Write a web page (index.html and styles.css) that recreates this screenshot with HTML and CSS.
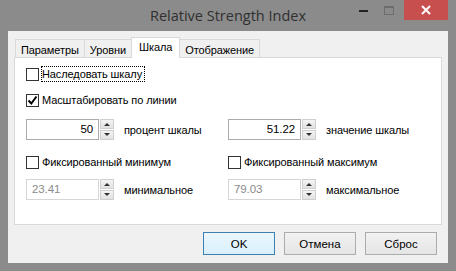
FILE: index.html
```html
<!DOCTYPE html>
<html lang="ru">
<head>
    <meta charset="UTF-8">
    <title>Relative Strength Index</title>
    <link rel="stylesheet" href="styles.css">
</head>
<body>
    <div class="window">
        <div class="titlebar">
            <div class="title">Relative Strength Index</div>
            <div class="controls">
                <span class="ctl min"><span class="dash"></span></span>
                <span class="ctl max"><span class="box"></span></span>
                <span class="ctl close">
                    <svg width="10" height="10" viewBox="0 0 10 10"><path d="M1 1L9 9M9 1L1 9" stroke="#fff" stroke-width="2"/></svg>
                </span>
            </div>
        </div>
        <div class="client">
            <div class="tabs">
                <div class="tab">Параметры</div>
                <div class="tab">Уровни</div>
                <div class="tab active">Шкала</div>
                <div class="tab">Отображение</div>
            </div>
            <div class="panel">
                <label class="check"><span class="box"></span><span class="focus">Наследовать шкалу</span></label>
                <label class="check"><span class="box">
                    <svg width="11" height="11" viewBox="0 0 11 11"><path d="M1.5 5.5L4.3 8.5L9.5 1.5" fill="none" stroke="#000" stroke-width="2"/></svg>
                </span>Масштабировать по линии</label>

                <div class="grid">
                    <div class="field">
                        <div class="spin"><div class="input">50</div><div class="arrows"><span class="up"></span><span class="down"></span></div></div>
                        <span class="lbl">процент шкалы</span>
                    </div>
                    <div class="field">
                        <div class="spin"><div class="input">51.22</div><div class="arrows"><span class="up"></span><span class="down"></span></div></div>
                        <span class="lbl">значение шкалы</span>
                    </div>
                    <label class="check"><span class="box"></span>Фиксированный минимум</label>
                    <label class="check"><span class="box"></span>Фиксированный максимум</label>
                    <div class="field">
                        <div class="spin off"><div class="input">23.41</div><div class="arrows"><span class="up"></span><span class="down"></span></div></div>
                        <span class="lbl">минимальное</span>
                    </div>
                    <div class="field">
                        <div class="spin off"><div class="input">79.03</div><div class="arrows"><span class="up"></span><span class="down"></span></div></div>
                        <span class="lbl">максимальное</span>
                    </div>
                </div>
            </div>
            <div class="buttons">
                <button class="default">OK</button>
                <button>Отмена</button>
                <button>Сброс</button>
            </div>
        </div>
    </div>
</body>
</html>
```

FILE: styles.css
```css
body {
    margin: 0;
    background: #8b8b8b;
    font-family: "Liberation Sans", Arial, sans-serif;
    font-size: 11px;
    letter-spacing: -0.1px;
    color: #000;
}
.window {
    width: 456px;
    height: 271px;
    display: flex;
    flex-direction: column;
    background: #8b8b8b;
}
.titlebar {
    height: 31px;
    display: flex;
    position: relative;
}
.title {
    flex: 1;
    text-align: center;
    padding-top: 6px;
    font-family: "Open Sans", sans-serif;
    font-size: 14.5px;
    letter-spacing: 0;
    color: #303030;
}
.controls {
    position: absolute;
    right: 8px;
    top: 0;
    display: flex;
}
.ctl {
    height: 20px;
    display: flex;
    align-items: center;
    justify-content: center;
}
.min {
    width: 26px;
}
.min .dash {
    width: 9px;
    height: 2px;
    background: #222;
    margin-top: 2px;
}
.max {
    width: 26px;
}
.max .box {
    width: 8px;
    height: 6px;
    border: 1px solid #6c6c6c;
    border-top-width: 2px;
}
.close {
    width: 44px;
    background: #c7504e;
    margin-left: 2px;
}
.client {
    flex: 1;
    margin: 0 8px 8px 8px;
    background: #f0f0f0;
    padding: 6px 6px 0 6px;
    display: flex;
    flex-direction: column;
}
.tabs {
    display: flex;
    height: 20px;
    align-items: flex-end;
    position: relative;
    z-index: 1;
}
.tab {
    height: 18px;
    padding: 1px 5px 0 5px;
    border: 1px solid #d9d9d9;
    border-bottom: none;
    margin-right: -1px;
    line-height: 18px;
    background: #f0f0f0;
    box-sizing: border-box;
}
.tab:first-child {
    margin-left: 1px;
}
.tab.active {
    height: 21px;
    background: #fff;
    margin-bottom: -1px;
    padding: 0 7px;
    line-height: 19px;
    z-index: 2;
}
.panel {
    height: 168px;
    background: #fff;
    border: 1px solid #d9d9d9;
    box-sizing: border-box;
    padding: 9px 11px 0 11px;
}
.check {
    display: flex;
    align-items: center;
    height: 14px;
    margin-bottom: 12px;
}
.check .box {
    width: 13px;
    height: 13px;
    border: 1px solid #333;
    box-sizing: border-box;
    background: #fff;
    margin-right: 3px;
    display: flex;
    align-items: center;
    justify-content: center;
}
.focus {
    outline: 1px dotted #000;
    padding: 0 2px 0 0;
    line-height: 14px;
}
.grid {
    display: grid;
    grid-template-columns: 202px 1fr;
}
.field {
    display: flex;
    align-items: center;
    height: 21px;
    margin-bottom: 15px;
}
.grid .check {
    margin-bottom: 10px;
}
.spin {
    display: flex;
    align-items: stretch;
    height: 21px;
}
.input {
    width: 73px;
    border: 1px solid #ababab;
    box-sizing: border-box;
    text-align: right;
    padding: 0 5px;
    line-height: 19px;
    font-size: 11.5px;
    background: #fff;
}
.off .input {
    text-align: left;
    color: #8a8a8a;
    border-color: #d6d6d6;
}
.arrows {
    width: 14px;
    margin-left: 1px;
    display: flex;
    flex-direction: column;
    gap: 1px;
}
.arrows span {
    flex: 1;
    background: linear-gradient(#f4f4f4, #e2e2e2);
    border: 1px solid #cfcfcf;
    position: relative;
}
.arrows .up::after,
.arrows .down::after {
    content: "";
    position: absolute;
    left: 3px;
    top: 3px;
    border-left: 3px solid transparent;
    border-right: 3px solid transparent;
}
.arrows .up::after {
    border-bottom: 3px solid #333;
}
.arrows .down::after {
    border-top: 3px solid #333;
    top: 2px;
}
.lbl {
    margin-left: 10px;
}
.buttons {
    display: flex;
    justify-content: flex-end;
    gap: 9px;
    padding-top: 7px;
    padding-right: 5px;
}
button {
    width: 72px;
    height: 23px;
    font-family: inherit;
    font-size: 11.5px;
    background: linear-gradient(#f2f2f2, #e5e5e5);
    border: 1px solid #acacac;
    padding: 0;
}
button.default {
    border-color: #3c7fb1;
    background: linear-gradient(#eaf6fd, #d9f0fc);
}
```
